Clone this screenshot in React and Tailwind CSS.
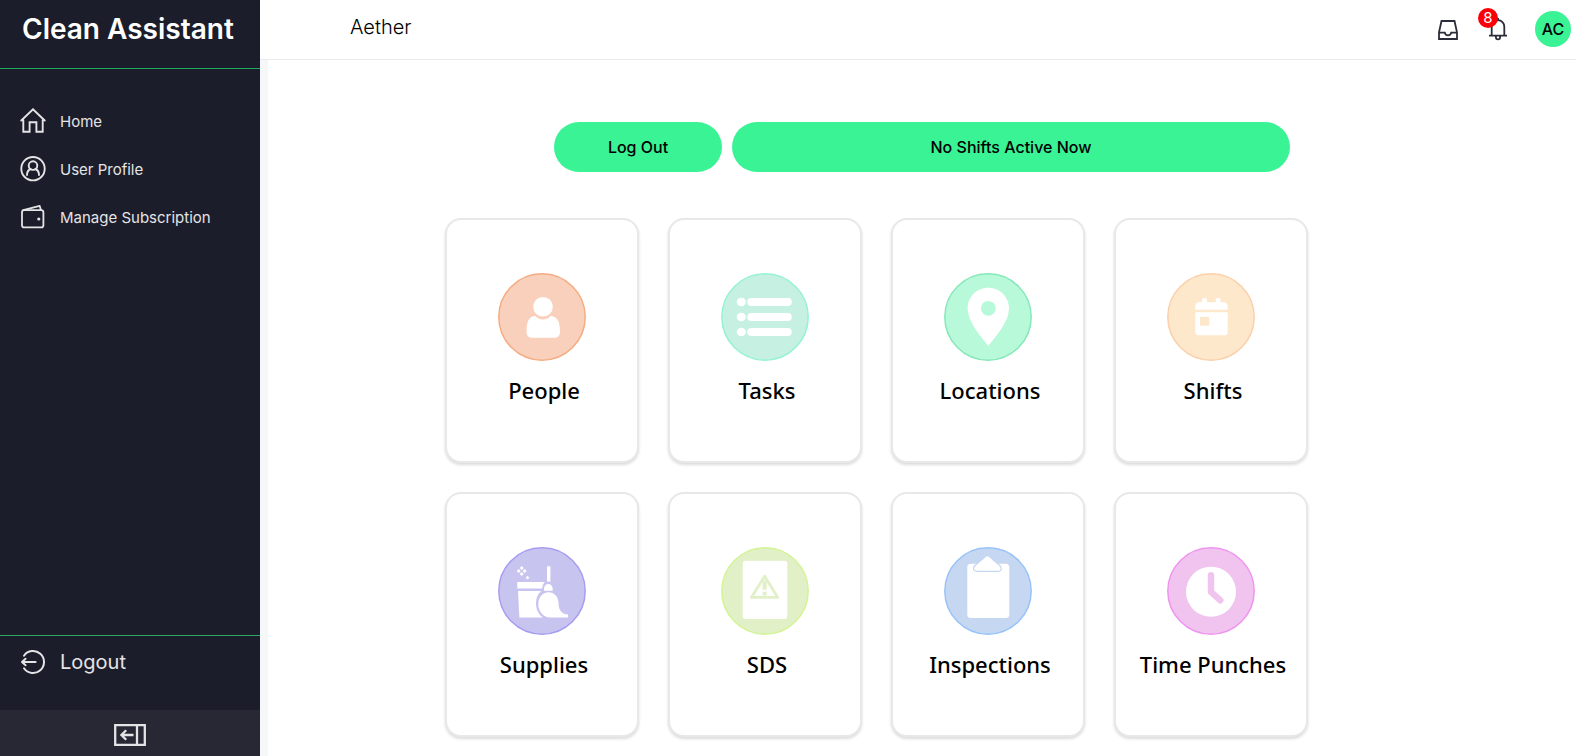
const line = { fill: "none", stroke: "currentColor", strokeLinecap: "round", strokeLinejoin: "round" };

function HomeIcon() {
  return (
    <svg className="size-[26px]" viewBox="0 0 26 26" {...line} strokeWidth="1.9" aria-hidden="true">
      <path d="M1.300 12.500 13 1.300l11.700 11.200M3.300 12.200v11.500h6.300v-9.500h6.800v9.500h6.300V12.200" strokeLinejoin="miter" />
    </svg>
  );
}

function ProfileIcon() {
  return (
    <svg className="size-[26px]" viewBox="0 0 26 26" {...line} strokeWidth="1.9" aria-hidden="true">
      <circle cx="13" cy="12.700" r="11.700" />
      <circle cx="13" cy="9.600" r="4.300" />
      <path d="M7 19c0-3.600 1.700-5.200 3.700-6M19 19c0-3.600-1.700-5.200-3.700-6" />
    </svg>
  );
}

function WalletIcon() {
  return (
    <svg className="size-[26px]" viewBox="0 0 26 26" {...line} strokeWidth="1.800" aria-hidden="true">
      <rect x="2" y="6.200" width="21.400" height="17.200" rx="2.200" />
      <path d="M3.200 6.200 19.700 1.900l1.200 4.100" />
      <circle cx="18.800" cy="15" r="1" fill="currentColor" stroke="none" />
      <circle cx="18.800" cy="15" r="1.600" fill="currentColor" stroke="none" />
    </svg>
  );
}

function LogoutIcon() {
  return (
    <svg className="size-[26px]" viewBox="0 0 26 26" {...line} strokeWidth="2" aria-hidden="true">
      <path d="M4 6.700a11 11 0 1 1 0 12.600" />
      <path d="M15.600 13H2.200M5.600 9.800 2 13l3.600 3.200" />
    </svg>
  );
}

function CollapseIcon() {
  return (
    <svg className="h-[22px] w-8" viewBox="0 0 32 22" fill="none" stroke="currentColor" strokeWidth="2.300" aria-hidden="true">
      <path d="M1.200 1.200h29.600v19.600H1.200zM23 1v20M19.500 11H8M12.200 6.200 7.400 11l4.800 4.800" />
    </svg>
  );
}

function InboxIcon() {
  return (
    <svg className="size-5" viewBox="0 0 20 20" fill="none" stroke="currentColor" strokeWidth="1.800" aria-hidden="true">
      <path d="M3.500 1h13L19 12.400V19H1v-6.600zM1 12.600h5.800c.3 1.800 1.400 2.700 3.200 2.700s2.900-.9 3.200-2.700H19" />
    </svg>
  );
}

function BellIcon() {
  return (
    <svg className="h-[23px] w-[18px]" viewBox="0 0 18 23" fill="none" stroke="currentColor" strokeWidth="1.800" aria-hidden="true">
      <path d="M2.700 17.600V8.500a6.300 6.300 0 0 1 12.600 0v9.100M0 17.600h18M6.900 18v1.200a2.100 2.100 0 0 0 4.200 0V18M9 2.300V0" />
    </svg>
  );
}

const tiles = [
  {
    label: "People",
    fill: "#f9d0bb",
    ring: "#f4ac80",
    glyph: (
      <>
        <circle cx="45" cy="33.700" r="9.800" />
        <path d="M37.500 43c2.200 2.700 4.600 3.400 7.500 3.400s5.300-.7 7.500-3.400c6.200 0 9.500 5 9.500 15.700 0 3.800-1.800 6-5.300 6H33.900c-3.500 0-5.300-2.200-5.300-6C28.600 48 31.300 43 37.500 43z" />
      </>
    ),
  },
  {
    label: "Tasks",
    fill: "#c5f0e2",
    ring: "#95f3d3",
    glyph: (
      <>
        {[29, 44, 59].map((y) => (
          <g key={y}>
            <ellipse cx="20.300" cy={y} rx="4.600" ry="4.200" />
            <rect x="26.300" y={y - 4} width="44.500" height="8" rx="4" />
          </g>
        ))}
      </>
    ),
  },
  {
    label: "Locations",
    fill: "#b8f9d9",
    ring: "#86e8b9",
    glyph: (
      <path
        fillRule="evenodd"
        d="M44.300 14.700c11.600 0 20.700 9 20.700 20.500C65 49 52.500 62 44.300 73 36 62 23.700 49 23.700 35.200c0-11.500 9-20.500 20.600-20.500zm0 13.200a7.400 7.400 0 1 0 0 14.800 7.400 7.400 0 0 0 0-14.800z"
      />
    ),
  },
  {
    label: "Shifts",
    fill: "#fee8cb",
    ring: "#fbd0aa",
    glyph: (
      <>
        <rect x="35" y="25" width="5" height="8" rx="2" />
        <rect x="48.700" y="25" width="5" height="8" rx="2" />
        <path d="M28.300 36.700v-3.200c0-2.300 1.500-4.200 3.800-4.200h24.800c2.300 0 3.800 1.900 3.800 4.200v3.200z" />
        <path fillRule="evenodd" d="M28.300 39.300h32.400v20c0 2-1 3-3 3H31.300c-2 0-3-1-3-3zM34 43.700c-.7 0-1 .3-1 1v7c0 .7.3 1 1 1h7.300c.7 0 1-.3 1-1v-7c0-.7-.3-1-1-1z" />
      </>
    ),
  },
  {
    label: "Supplies",
    fill: "#c8c4f0",
    ring: "#a79df0",
    glyph: (
      <>
        <path d="M23.700 19l2 2-2 2-2-2zM23.700 25l2 2-2 2-2-2zM20.700 22l2 2-2 2-2-2zM26.700 22l2 2-2 2-2-2zM29.500 28.800l1.900 1.900-1.900 1.900-1.900-1.900z" />
        <rect x="49" y="19.300" width="3.400" height="15.400" />
        <path d="M19.300 35h27.500c-1.500 1.700-2.500 3.700-2.500 6.400h-25z" />
        <path d="M46 43.700v-1.900c0-2.700 1.700-4.800 4.300-4.800s4.400 2.100 4.400 4.800v1.900z" />
        <path d="M20 43.900h23.200c-3.600 3-5.200 7.200-5.200 12.500 0 6 2.600 10.800 6.900 14.200H21.400z" />
        <path d="M50.500 45.200c6.200 0 10.100 4.800 10.100 11.600 0 6.700 3.600 10.700 9.500 10.700v2.900H52.500c-7.200 0-12.200-6-12.200-13.200 0-7 4.200-12 10.200-12z" />
      </>
    ),
  },
  {
    label: "SDS",
    fill: "#e2f0c7",
    ring: "#d2f495",
    glyph: (
      <>
        <rect x="21.700" y="13.700" width="44.600" height="58.300" rx="3" />
        <path d="M43.600 29.300 30.400 50.400h26.400z" fill="none" stroke="#e2f0c7" strokeWidth="2.800" strokeLinejoin="round" />
        <path d="M43.600 33.500v9.200M43.600 44.800v3.600" fill="none" stroke="#e2f0c7" strokeWidth="4" />
      </>
    ),
  },
  {
    label: "Inspections",
    fill: "#c6d7f1",
    ring: "#98c3fa",
    glyph: (
      <>
        <rect x="23.300" y="16.700" width="42" height="54.300" rx="3.500" />
        <path
          d="M41.400 9.600c1.200-1.100 2.800-1.100 4 0l10.600 9.100c2.600 2.300 1.500 5.700-1.800 5.700H32.600c-3.300 0-4.400-3.400-1.800-5.700z"
          stroke="#c6d7f1"
          strokeWidth="1.300"
        />
      </>
    ),
  },
  {
    label: "Time Punches",
    fill: "#f0c4ef",
    ring: "#f095ef",
    glyph: (
      <>
        <circle cx="44" cy="44.700" r="25" />
        <path d="M44 28.200v16.600l9.300 8.600" fill="none" stroke="#f0c4ef" strokeWidth="6.400" strokeLinecap="round" />
      </>
    ),
  },
];

function Tile({ label, fill, ring, glyph }) {
  return (
    <a
      href="#"
      className="flex h-[245px] flex-col items-center rounded-2xl border-2 border-[#e8e8e8] bg-white pt-[53px] shadow-[0_2px_3px_rgba(0,0,0,0.14)]"
    >
      <svg className="size-[88px]" viewBox="0 0 88 88" fill="#fff" aria-hidden="true">
        <circle cx="44" cy="44" r="43.200" fill={fill} stroke={ring} strokeWidth="1.500" />
        {glyph}
      </svg>
      <span className="mt-3 pl-1 font-['Noto_Sans',sans-serif] text-[22px] leading-[34px] font-medium whitespace-nowrap text-black">
        {label}
      </span>
    </a>
  );
}

const nav = [
  { label: "Home", Icon: HomeIcon },
  { label: "User Profile", Icon: ProfileIcon },
  { label: "Manage Subscription", Icon: WalletIcon },
];

export default function App() {
  return (
    <div className="flex min-h-screen bg-white font-['Inter',sans-serif]">
      <aside className="sticky top-0 flex h-screen w-[260px] shrink-0 flex-col bg-[#1c1d2a] text-[#e4e4e6]">
        <div className="flex h-[69px] items-start border-b border-[#21a65f] px-[22px] pt-2">
          <span className="text-[28px] leading-[42px] font-semibold whitespace-nowrap text-white">Clean Assistant</span>
        </div>
        <nav className="flex flex-col pt-7">
          {nav.map(({ label, Icon }) => (
            <a key={label} href="#" className="flex h-12 items-center gap-[14px] px-5 text-[15px]">
              <Icon />
              <span className="pt-0.5">{label}</span>
            </a>
          ))}
        </nav>
        <div className="mt-auto h-[75px] border-t border-[#2fa568]">
          <button type="button" className="flex h-[52px] w-full items-center gap-[14px] px-5 text-xl">
            <LogoutIcon />
            Logout
          </button>
        </div>
        <button type="button" aria-label="Collapse sidebar" className="flex h-[46px] items-center justify-center bg-[#272834] pt-1">
          <CollapseIcon />
        </button>
      </aside>

      <div className="flex min-w-0 grow flex-col">
        <header className="flex h-[60px] items-center justify-between border-b border-[#eaeaec] pr-[5px] pl-[90px]">
          <h1 className="pb-1.5 text-xl font-light text-black">Aether</h1>
          <div className="flex items-center text-[#2b2c3a]">
            <button type="button" aria-label="Inbox">
              <InboxIcon />
            </button>
            <button type="button" aria-label="Notifications" className="relative ml-[31px]">
              <BellIcon />
              <span className="absolute -top-[10px] -left-[11px] flex size-5 items-center justify-center rounded-full bg-[#fb0007] text-[15px] text-white">
                8
              </span>
            </button>
            <button
              type="button"
              aria-label="Account"
              className="mb-0.5 ml-7 flex size-9 items-center justify-center rounded-full bg-[#39f395] text-base font-medium text-black"
            >
              AC
            </button>
          </div>
        </header>

        <main className="grow border-l-8 border-[#f5f7f9] pt-[62px] pb-[19px]">
          <div className="mx-auto flex max-w-[736px] gap-2.5 text-base font-medium text-black">
            <button type="button" className="h-[50px] w-[168px] shrink-0 rounded-full bg-[#39f395]">
              Log Out
            </button>
            <button type="button" className="h-[50px] grow rounded-full bg-[#39f395]">
              No Shifts Active Now
            </button>
          </div>
          <div className="mt-[46px] pr-[91px]">
            <div className="mx-auto grid max-w-[863px] grid-cols-4 gap-[29px]">
              {tiles.map((tile) => (
                <Tile key={tile.label} {...tile} />
              ))}
            </div>
          </div>
        </main>
      </div>
    </div>
  );
}
